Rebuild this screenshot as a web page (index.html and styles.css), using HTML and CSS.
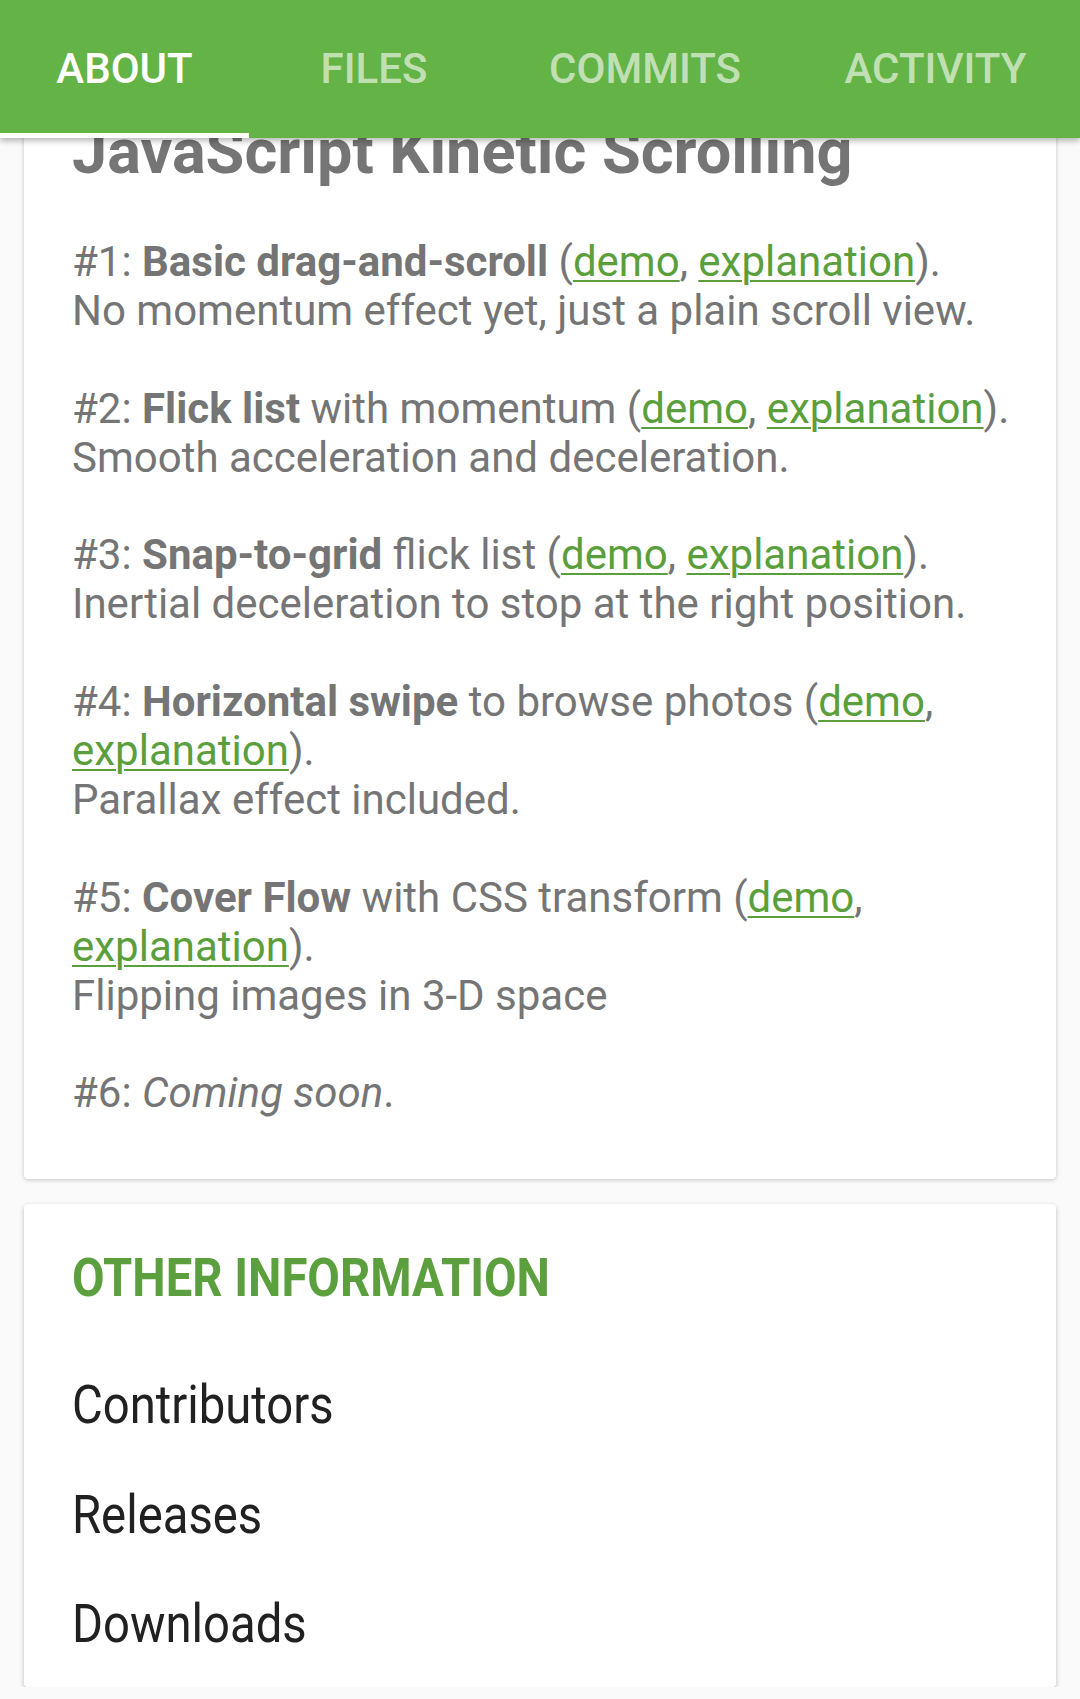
FILE: index.html
```html
<!DOCTYPE html>
<html lang="en">
<head>
<meta charset="utf-8">
<title>Kinetic Scrolling</title>
<link rel="stylesheet" href="styles.css">
</head>
<body>
<header class="tabbar">
  <div class="tab tab-about active">ABOUT</div>
  <div class="tab tab-files">FILES</div>
  <div class="tab tab-commits">COMMITS</div>
  <div class="tab tab-activity">ACTIVITY</div>
</header>
<main class="content">
  <section class="card readme">
    <h1 class="title">JavaScript Kinetic Scrolling</h1>
    <p>#1: <b>Basic drag-and-scroll</b> (<a href="#">demo</a>, <a href="#">explanation</a>).<br>No momentum effect yet, just a plain scroll view.</p>
    <p>#2: <b>Flick list</b> with momentum (<a href="#">demo</a>, <a href="#">explanation</a>).<br>Smooth acceleration and deceleration.</p>
    <p>#3: <b>Snap-to-grid</b> flick list (<a href="#">demo</a>, <a href="#">explanation</a>).<br>Inertial deceleration to stop at the right position.</p>
    <p>#4: <b>Horizontal swipe</b> to browse photos (<a href="#">demo</a>, <a href="#">explanation</a>).<br>Parallax effect included.</p>
    <p>#5: <b>Cover Flow</b> with CSS transform (<a href="#">demo</a>, <a href="#">explanation</a>).<br>Flipping images in 3-D space</p>
    <p>#6: <i>Coming soon</i>.</p>
  </section>
  <section class="card info">
    <h2 class="info-title"><span class="cond">OTHER INFORMATION</span></h2>
    <ul class="info-list">
      <li><span class="cond">Contributors</span></li>
      <li><span class="cond">Releases</span></li>
      <li><span class="cond">Downloads</span></li>
    </ul>
  </section>
</main>
</body>
</html>
```

FILE: styles.css
```css
html, body {
  margin: 0;
  padding: 0;
}
body {
  background: #fafafa;
  font-family: Roboto, "Noto Sans", "Liberation Sans", sans-serif;
  overflow: hidden;
}
.tabbar {
  position: relative;
  z-index: 2;
  display: flex;
  height: 138px;
  background: #64b346;
  box-shadow: 0 3px 6px rgba(0, 0, 0, 0.28);
}
.tab {
  display: flex;
  align-items: center;
  justify-content: center;
  box-sizing: border-box;
  padding-bottom: 2px;
  font-size: 42px;
  font-weight: 500;
  color: rgba(255, 255, 255, 0.62);
  letter-spacing: 0;
}
.tab.active {
  color: #ffffff;
  border-bottom: 5px solid #ffffff;
  padding-bottom: 0;
  padding-top: 3px;
}
.tab-about { width: 249px; }
.tab-files { width: 250px; }
.tab-commits { width: 292px; }
.tab-activity { width: 289px; }

.content {
  display: flex;
  flex-direction: column;
  gap: 25px;
  padding: 0 24px;
}
.card {
  background: #ffffff;
  border-radius: 4px;
  box-shadow: 0 1px 4px rgba(0, 0, 0, 0.22);
}
.readme {
  margin-top: -61px;
  padding: 40px 26px 61px 48px;
  color: #757575;
  font-size: 42px;
  line-height: 48.9px;
}
.title {
  margin: 0 0 51px;
  font-size: 63px;
  line-height: 70px;
  font-weight: 700;
  color: #757575;
}
.readme p {
  margin: 0 0 48.9px;
}
.readme p:last-child {
  margin-bottom: 0;
}
.readme b {
  font-weight: 700;
}
.readme a {
  color: #5a9f3c;
  text-decoration: underline;
  text-decoration-thickness: 2px;
  text-underline-offset: 4px;
}
.info {
  padding: 42px 48px 8px;
  box-shadow: 0 2px 5px rgba(0, 0, 0, 0.25);
}
.cond {
  display: inline-block;
  transform: scaleX(0.875);
  transform-origin: left center;
  white-space: nowrap;
}
.info-title {
  margin: 0 0 40px;
  font-size: 54px;
  line-height: 64px;
  font-weight: 700;
  color: #5b9f3e;
}
.info-list {
  list-style: none;
  margin: 0;
  padding: 0;
}
.info-list li {
  font-size: 54px;
  line-height: 109.5px;
  color: #212121;
}
```
